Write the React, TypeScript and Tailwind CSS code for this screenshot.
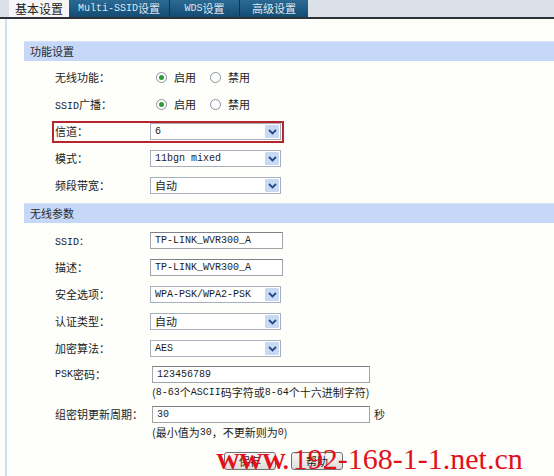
import type { ReactNode } from 'react'

const cjk = "font-['Noto_Sans_CJK_SC',sans-serif]"
const mono = "font-['Liberation_Mono','Noto_Sans_CJK_SC',monospace] text-[10px]"

function Radio({ checked }: { checked?: boolean }) {
  return (
    <span className="flex h-[11px] w-[11px] items-center justify-center rounded-full border border-[#8b939c] bg-white">
      {checked && <span className="h-[5px] w-[5px] rounded-full bg-[#2f9a3a]" />}
    </span>
  )
}

function Select({ value, latin }: { value: string; latin?: boolean }) {
  return (
    <div className="flex h-[17px] w-[131px] items-center border border-[#a7b0bb] bg-white">
      <span className={`flex-1 pl-[4px] ${latin ? mono : 'text-[11px]'}`}>{value}</span>
      <span className="mr-px flex h-[13px] w-[14px] items-center justify-center rounded-[1px] bg-[#c8d9f4]">
        <svg width="9" height="6" viewBox="0 0 9 6">
          <path d="M1 1 L4.5 4.5 L8 1" fill="none" stroke="#234a86" strokeWidth="1.8" />
        </svg>
      </span>
    </div>
  )
}

function TextInput({ value, w }: { value: string; w: string }) {
  return (
    <div className={`flex h-[17px] items-center border border-[#9fa5ab] border-t-[#7d8287] bg-white pl-[4px] ${w}`}>
      <span className={mono}>{value}</span>
    </div>
  )
}

function Row({ label, children, red }: { label: ReactNode; children: ReactNode; red?: boolean }) {
  return (
    <div className="flex h-[27px] items-center pl-[52px]">
      <div
        className={`flex h-[22px] items-center border-2 pl-px pr-px ${red ? 'border-[#b8252f]' : 'border-transparent'}`}
      >
        <div className="w-[95px] text-[11px]">{label}</div>
        {children}
      </div>
    </div>
  )
}

function RadioPair() {
  return (
    <div className="flex items-center pl-[6px] text-[11px]">
      <Radio checked />
      <span className="ml-[7px]">启用</span>
      <span className="ml-[14px]">
        <Radio />
      </span>
      <span className="ml-[7px]">禁用</span>
    </div>
  )
}

function Header({ title }: { title: string }) {
  return (
    <div className="ml-[24px] flex h-[20px] items-center border-t border-[#d6e3f8] bg-[#c5d8f7] pl-[6px] text-[11px] text-[#2a2a2a]">
      {title}
    </div>
  )
}

export default function App() {
  return (
    <div className={`relative h-[476px] w-[554px] overflow-hidden bg-[#fefefb] text-[#1c1c1c] ${cjk}`}>
      {/* tab bar */}
      <div className="flex h-[19px] items-end border-b-2 border-[#2e3238] bg-[#dbe0e9] pl-[9px]">
        <div className="flex h-[17px] w-[60px] items-center justify-center bg-[#f6f6f6] text-[12px] text-[#222]">
          基本设置
        </div>
        <div className="flex h-[17px] w-[101px] items-center justify-center border-r border-[#0b3756] bg-gradient-to-b from-[#2c6a93] to-[#124c74] text-[#dfe7ef]">
          <span className={mono}>Multi-SSID</span>
          <span className="text-[11px]">设置</span>
        </div>
        <div className="flex h-[17px] w-[70px] items-center justify-center border-r border-[#0b3756] bg-gradient-to-b from-[#2c6a93] to-[#124c74] text-[#dfe7ef]">
          <span className={mono}>WDS</span>
          <span className="text-[11px]">设置</span>
        </div>
        <div className="flex h-[17px] w-[68px] items-center justify-center bg-gradient-to-b from-[#2c6a93] to-[#124c74] text-[11px] text-[#dfe7ef]">
          高级设置
        </div>
      </div>

      <div className="ml-[5px] h-full border-l-2 border-[#d3dff0] pt-[22px]">
        <div className="-ml-[7px]">
          <Header title="功能设置" />
          <div className="pt-[3px]">
            <Row label="无线功能：">
              <RadioPair />
            </Row>
            <Row
              label={
                <>
                  <span className={mono}>SSID</span>广播：
                </>
              }
            >
              <RadioPair />
            </Row>
            <Row label="信道：" red>
              <Select value="6" latin />
            </Row>
            <Row label="模式：">
              <Select value="11bgn mixed" latin />
            </Row>
            <Row label="频段带宽：">
              <Select value="自动" />
            </Row>
          </div>

          <div className="mt-[4px]">
            <Header title="无线参数" />
          </div>
          <div className="pt-[4px]">
            <Row label={<span className={mono}>SSID：</span>}>
              <TextInput value="TP-LINK_WVR300_A" w="w-[133px]" />
            </Row>
            <Row label="描述：">
              <TextInput value="TP-LINK_WVR300_A" w="w-[133px]" />
            </Row>
            <Row label="安全选项：">
              <Select value="WPA-PSK/WPA2-PSK" latin />
            </Row>
            <Row label="认证类型：">
              <Select value="自动" />
            </Row>
            <Row label="加密算法：">
              <Select value="AES" latin />
            </Row>

            <div className="flex pl-[55px] pt-[4px]">
              <div className="flex h-[17px] w-[97px] items-center text-[11px]">
                <span className={mono}>PSK</span>密码：
              </div>
              <div>
                <TextInput value="123456789" w="w-[218px]" />
                <div className="flex h-[18px] items-center text-[11px]">
                  (<span className={mono}>8-63</span>个<span className={mono}>ASCII</span>码字符或
                  <span className={mono}>8-64</span>个十六进制字符)
                </div>
              </div>
            </div>

            <div className="flex pl-[55px] pt-[5px]">
              <div className="flex h-[17px] w-[97px] items-center text-[11px]">组密钥更新周期：</div>
              <div>
                <div className="flex items-center">
                  <TextInput value="30" w="w-[218px]" />
                  <span className="ml-[4px] text-[11px]">秒</span>
                </div>
                <div className="flex h-[18px] items-center text-[11px]">
                  (最小值为<span className={mono}>30</span>，不更新则为<span className={mono}>0</span>)
                </div>
              </div>
            </div>

            <div className="relative mt-[11px] flex pl-[224px]">
              <button className="h-[18px] w-[52px] rounded-[3px] border border-[#707070] bg-gradient-to-b from-[#fafafa] to-[#dcdcdc] text-[11px]">
                保存
              </button>
              <button className="ml-[15px] h-[18px] w-[52px] rounded-[3px] border border-[#707070] bg-gradient-to-b from-[#fafafa] to-[#dcdcdc] text-[11px]">
                帮助
              </button>
              <div className="pointer-events-none absolute left-[216px] top-[-8px] flex items-baseline whitespace-nowrap font-['Liberation_Serif',serif] text-[30px] leading-none text-[#e2101a]">
                <span className="text-[24px] font-bold tracking-[-1px]">WWW.</span>
                <span className="ml-[5px]">192-168-1-1.net.cn</span>
              </div>
            </div>
          </div>
        </div>
      </div>
    </div>
  )
}
